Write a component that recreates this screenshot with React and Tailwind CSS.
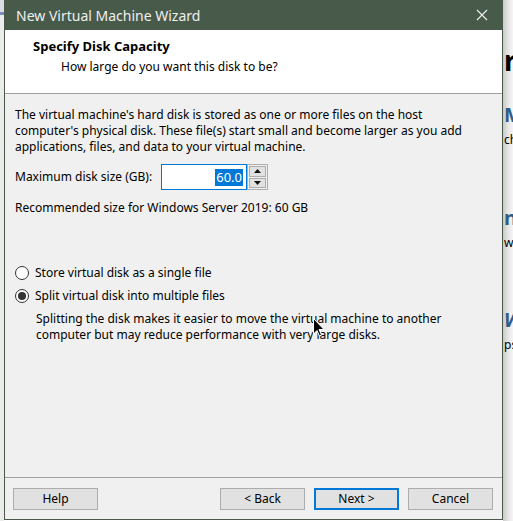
import React from "react";

const font = { fontFamily: '"Noto Sans", "Open Sans", sans-serif' };

function Radio({ checked, label }) {
  return (
    <div className="flex items-center h-[16px]">
      <span className="w-[14px] h-[14px] rounded-full border border-[#333] bg-white flex items-center justify-center">
        {checked && <span className="w-[8px] h-[8px] rounded-full bg-[#333]" />}
      </span>
      <span className="ml-[6px]">{label}</span>
    </div>
  );
}

function Btn({ children, primary }) {
  return (
    <div
      className={`w-[85px] h-[22px] flex items-center justify-center bg-[#e1e1e1] ${
        primary ? "border-2 border-[#0078d7]" : "border border-[#adadad]"
      }`}
    >
      {children}
    </div>
  );
}

export default function App() {
  return (
    <div className="w-[513px] h-[521px] relative overflow-hidden flex bg-white text-[12px] text-black" style={font}>
      {/* left sliver of window behind */}
      <div className="w-[4px] bg-[#ececec] flex flex-col">
        <div className="h-[12px] bg-[#d9dde3]" />
        <div className="h-[3px] bg-[#7b8fb5]" />
      </div>

      {/* dialog */}
      <div className="w-[499px] h-[520px] flex flex-col border-x border-b border-[#4a5a4a] bg-[#f0f0f0]">
        <div className="h-[30px] bg-[#485a4a] flex items-center justify-between pl-[11px] pr-[14px] text-[#eef0ee] text-[14px]">
          <span>New Virtual Machine Wizard</span>
          <svg width="12" height="12" viewBox="0 0 12 12">
            <path d="M1 1 L11 11 M11 1 L1 11" stroke="#f0f0f0" strokeWidth="1.1" />
          </svg>
        </div>

        <div className="h-[64px] bg-white border-b border-[#a0a0a0] pt-[7px]">
          <div className="pl-[28px] font-bold text-[13px] leading-[18px]">Specify Disk Capacity</div>
          <div className="pl-[56px] mt-[3px] leading-[18px]">How large do you want this disk to be?</div>
        </div>

        <div className="flex-1 flex flex-col px-[10px] pt-[13px] leading-[16px]">
          <p className="whitespace-nowrap">
            The virtual machine's hard disk is stored as one or more files on the host
            <br />
            computer's physical disk. These file(s) start small and become larger as you add
            <br />
            applications, files, and data to your virtual machine.
          </p>

          <div className="flex items-center mt-[9px] h-[26px]">
            <span className="w-[146px]">Maximum disk size (GB):</span>
            <div className="w-[86px] h-[26px] border border-[#0078d7] bg-white flex items-center justify-end pr-[3px]">
              <span className="bg-[#0078d7] text-white px-[1px] leading-[17px] text-[13px]">60.0</span>
            </div>
            <div className="w-[21px] h-[26px] border border-[#adadad] bg-[#f0f0f0] flex flex-col p-[1px] gap-[1px]">
              <div className="flex-1 bg-[#e1e1e1] border border-[#adadad] flex items-center justify-center">
                <svg width="7" height="4" viewBox="0 0 7 4"><path d="M0 4 L3.5 0 L7 4 Z" fill="#111" /></svg>
              </div>
              <div className="flex-1 bg-[#e1e1e1] border border-[#adadad] flex items-center justify-center">
                <svg width="7" height="4" viewBox="0 0 7 4"><path d="M0 0 L7 0 L3.5 4 Z" fill="#111" /></svg>
              </div>
            </div>
          </div>

          <div className="mt-[10px]">Recommended size for Windows Server 2019: 60 GB</div>

          <div className="mt-[49px] flex flex-col gap-[7px]">
            <Radio label="Store virtual disk as a single file" />
            <Radio checked label="Split virtual disk into multiple files" />
          </div>
          <p className="pl-[21px] mt-[7px] pr-[40px]">
            Splitting the disk makes it easier to move the virtual machine to another computer but may reduce
            performance with very large disks.
          </p>
        </div>

        <div className="h-[42px] border-t border-[#a0a0a0] flex items-start pt-[10px] pl-[8px] pr-[9px]">
          <Btn>Help</Btn>
          <div className="flex-1" />
          <div className="flex gap-[9px]">
            <Btn>&lt; Back</Btn>
            <Btn primary>Next &gt;</Btn>
            <Btn>Cancel</Btn>
          </div>
        </div>
      </div>

      {/* page behind, to the right */}
      <div className="flex-1 overflow-hidden bg-gradient-to-r from-[#c9c9c9] via-[#e6e6e6] to-[#f5f5f5] flex flex-col pl-[1px] whitespace-nowrap">
        <div className="mt-[44px] text-[28px] font-bold leading-[32px]">rt</div>
        <div className="mt-[27px] text-[20px] font-bold text-[#2f5c8a] leading-[24px]">Ma</div>
        <div className="mt-[5px] text-[12px] leading-[16px]">chine</div>
        <div className="mt-[58px] text-[20px] font-bold text-[#2f5c8a] leading-[24px]">ne</div>
        <div className="mt-[5px] text-[12px] leading-[16px]">wha</div>
        <div className="mt-[57px] text-[20px] font-bold italic text-[#2f5c8a] leading-[24px]">Wo</div>
        <div className="mt-[5px] text-[12px] leading-[16px]">ps</div>
      </div>

      {/* mouse cursor */}
      <svg className="absolute left-[313px] top-[318px]" width="12" height="19" viewBox="0 0 12 19">
        <path d="M0.5 0.5 L0.5 16 L4 12.5 L6.5 18 L8.5 17 L6 11.5 L11 11.5 Z" fill="#000" stroke="#fff" strokeWidth="1" />
      </svg>
    </div>
  );
}
